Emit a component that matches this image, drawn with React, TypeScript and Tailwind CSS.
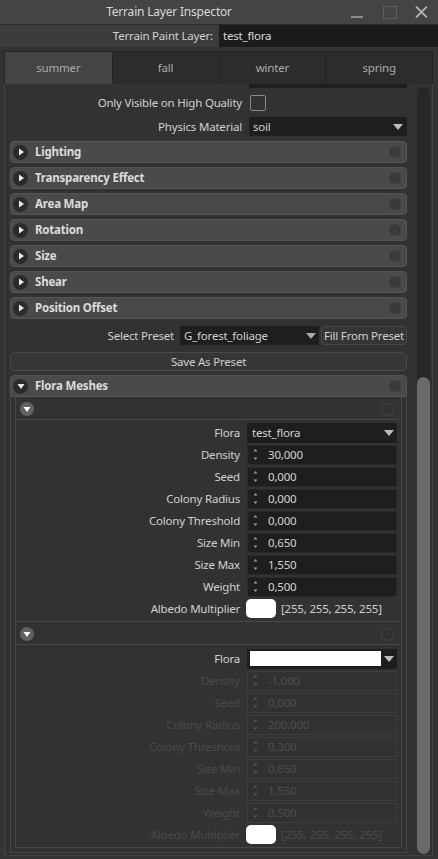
import React from "react";

const Tri = ({ dir, className }: { dir: "right" | "down"; className?: string }) => (
  <svg width="8" height="8" viewBox="0 0 8 8" className={className}>
    {dir === "right" ? (
      <path d="M2 0.5 L7 4 L2 7.5 Z" fill="currentColor" />
    ) : (
      <path d="M0.5 2 L7.5 2 L4 7 Z" fill="currentColor" />
    )}
  </svg>
);

const DropArrow = ({ className }: { className?: string }) => (
  <svg width="10" height="6" viewBox="0 0 10 6" className={className}>
    <path d="M0 0 L10 0 L5 6 Z" fill="currentColor" />
  </svg>
);

const Spin = ({ dim }: { dim?: boolean }) => (
  <svg width="5" height="13" viewBox="0 0 5 13" className={dim ? "text-[#5a5a5a]" : "text-[#9a9a9a]"}>
    <path d="M2.5 1 L4.5 3.5 L0.5 3.5 Z" fill="currentColor" />
    <path d="M0.5 9.5 L4.5 9.5 L2.5 12 Z" fill="currentColor" />
  </svg>
);

function Section({ title, open }: { title: string; open?: boolean }) {
  return (
    <div
      className={`h-[22px] flex items-center bg-[#4a4a4a] border border-[#555555] ${
        open ? "rounded-t-[4px]" : "rounded-[4px]"
      }`}
    >
      <div className="ml-[2px] w-[15px] h-[15px] rounded-full bg-[#2b2b2b] flex items-center justify-center text-[#ececec]">
        <Tri dir={open ? "down" : "right"} className={open ? "" : "ml-[1px]"} />
      </div>
      <span className="ml-[7px] font-bold text-[#dcdcdc]">{title}</span>
      <div className="ml-auto mr-[5px] w-[12px] h-[12px] rounded-full bg-[#3a3a3a]" />
    </div>
  );
}

function TopRow({ label, children, h = "h-[19px]" }: { label: string; children: React.ReactNode; h?: string }) {
  return (
    <div className={`flex items-center ${h}`}>
      <div className="w-[232px] text-right text-[#d0d0d0]">{label}</div>
      <div className="ml-[7px] w-[158px] h-full flex items-center">{children}</div>
    </div>
  );
}

function Field({ label, dim, children }: { label: string; dim?: boolean; children: React.ReactNode }) {
  return (
    <div className="flex items-center h-[19px]">
      <div className={`w-[224px] text-right ${dim ? "text-[#4b4b4b]" : "text-[#d0d0d0]"}`}>{label}</div>
      <div className="ml-[7px] w-[150px] h-full flex items-center">{children}</div>
    </div>
  );
}

function Num({ v, dim }: { v: string; dim?: boolean }) {
  return (
    <div
      className={`w-full h-[20px] flex items-center border ${
        dim ? "bg-[#313131] border-[#3d3d3d] text-[#4e4e4e]" : "bg-[#1e1e1e] border-[#2a2a2a] text-[#d2d2d2]"
      }`}
    >
      <div className="ml-[5px] flex items-center">
        <Spin dim={dim} />
      </div>
      <span className="ml-[10px]">{v}</span>
    </div>
  );
}

function Albedo({ dim }: { dim?: boolean }) {
  return (
    <div className="flex items-center -ml-[1px]">
      <div className="w-[30px] h-[19px] rounded-[5px] bg-white" />
      <span className={`ml-[5px] whitespace-nowrap ${dim ? "text-[#4b4b4b]" : "text-[#d0d0d0]"}`}>
        [255, 255, 255, 255]
      </span>
    </div>
  );
}

function SubHeader() {
  return (
    <div className="h-[23px] flex items-center border-b border-[#474747]">
      <div className="ml-[4px] mt-[2px] w-[14px] h-[14px] rounded-full bg-[#626262] flex items-center justify-center text-white">
        <Tri dir="down" />
      </div>
      <div className="ml-auto mr-[7px] mt-[2px] w-[13px] h-[13px] rounded-full border border-[#474747] bg-[#313131]" />
    </div>
  );
}

export default function App() {
  const f1: [string, string][] = [
    ["Density", "30,000"],
    ["Seed", "0,000"],
    ["Colony Radius", "0,000"],
    ["Colony Threshold", "0,000"],
    ["Size Min", "0,650"],
    ["Size Max", "1,550"],
    ["Weight", "0,500"],
  ];
  const f2: [string, string][] = [
    ["Density", "-1,000"],
    ["Seed", "0,000"],
    ["Colony Radius", "200,000"],
    ["Colony Threshold", "0,300"],
    ["Size Min", "0,650"],
    ["Size Max", "1,550"],
    ["Weight", "0,500"],
  ];
  return (
    <div className="w-[438px] h-[859px] overflow-hidden bg-[#333333] flex flex-col font-['Noto_Sans',sans-serif] text-[11.5px] tracking-[-0.2px] leading-none text-[#d0d0d0]">
      {/* title bar */}
      <div className="h-[25px] shrink-0 bg-[#444444] border-b border-[#2c2c2c] flex items-center">
        <div className="w-[338px] text-center text-[12px] text-[#d8d8d8]">Terrain Layer Inspector</div>
        <div className="flex-1 flex items-center h-full">
          <div className="ml-[13px] mt-[10px] w-[12px] h-[2px] bg-[#8a8a8a]" />
          <div className="ml-[20px] w-[14px] h-[13px] border border-[#5e5e5e]" />
          <svg width="13" height="12" viewBox="0 0 13 12" className="ml-[18px] text-[#b0b0b0]">
            <path d="M1 0.5 L12 11.5 M12 0.5 L1 11.5" stroke="currentColor" strokeWidth="1.8" />
          </svg>
        </div>
      </div>
      {/* paint layer */}
      <div className="h-[22px] shrink-0 bg-[#3c3c3c] flex items-center">
        <div className="w-[213px] text-right text-[#d0d0d0]">Terrain Paint Layer:</div>
        <div className="ml-[6px] flex-1 h-full bg-[#1b1b1b] flex items-center pl-[4px] text-[#dadada]">test_flora</div>
      </div>
      <div className="h-[4px] shrink-0" />
      {/* tabs */}
      <div className="ml-[4px] w-[429px] h-[33px] shrink-0 grid grid-cols-4 border-t border-x border-[#252525] bg-[#2c2c2c]">
        {["summer", "fall", "winter", "spring"].map((t, i) => (
          <div
            key={t}
            className={`flex items-center justify-center text-[#ababab] ${
              i === 0 ? "bg-[#444444]" : "bg-[#2c2c2c] border-l border-[#222222]"
            }`}
          >
            {t}
          </div>
        ))}
      </div>
      {/* content */}
      <div className="ml-[4px] w-[429px] h-[772px] shrink-0 flex border-x border-b border-[#424242] bg-[#323232]">
        <div className="ml-[5px] w-[397px] flex flex-col">
          <div className="ml-[239px] w-[158px] h-[4px] bg-[#1e1e1e]" />
          <div className="mt-[5px]">
            <TopRow label="Only Visible on High Quality" h="h-[20px]">
              <div className="ml-[1px] w-[16px] h-[16px] rounded-[2px] border border-[#8a8a8a]" />
            </TopRow>
          </div>
          <div className="mt-[4px]">
            <TopRow label="Physics Material">
              <div className="w-full h-full bg-[#1e1e1e] flex items-center pl-[4px] text-[#d2d2d2]">
                soil
                <DropArrow className="ml-auto mr-[4px] text-[#bdbdbd]" />
              </div>
            </TopRow>
          </div>
          <div className="mt-[5px] flex flex-col gap-[4px]">
            {["Lighting", "Transparency Effect", "Area Map", "Rotation", "Size", "Shear", "Position Offset"].map((s) => (
              <Section key={s} title={s} />
            ))}
          </div>
          <div className="mt-[7px] h-[19px] flex items-center">
            <div className="w-[164px] text-right">Select Preset</div>
            <div className="ml-[6px] w-[139px] h-full bg-[#1e1e1e] flex items-center pl-[4px] text-[#d2d2d2]">
              G_forest_foliage
              <DropArrow className="ml-auto mr-[3px] text-[#a8a8a8]" />
            </div>
            <div className="ml-[2px] flex-1 h-full rounded-[4px] border border-[#484848] bg-[#353535] flex items-center justify-center text-[#d0d0d0]">
              Fill From Preset
            </div>
          </div>
          <div className="mt-[7px] h-[19px] rounded-[5px] border border-[#4a4a4a] bg-[#363636] flex items-center justify-center text-[#d0d0d0]">
            Save As Preset
          </div>
          <div className="mt-[4px]">
            <Section title="Flora Meshes" open />
          </div>
          <div className="border-x border-b border-[#474747] px-[4px] pb-[4px] flex flex-col">
            {/* item 1 */}
            <div className="border-x border-b border-[#474747] flex flex-col">
              <SubHeader />
              <div className="mt-[3px] pb-[3px] flex flex-col gap-[3px]">
                <Field label="Flora">
                  <div className="w-full h-[20px] bg-[#1e1e1e] flex items-center pl-[5px] text-[#d2d2d2]">
                    test_flora
                    <DropArrow className="ml-auto mr-[3px] text-[#bdbdbd]" />
                  </div>
                </Field>
                {f1.map(([l, v]) => (
                  <Field key={l} label={l}>
                    <Num v={v} />
                  </Field>
                ))}
                <Field label="Albedo Multiplier">
                  <Albedo />
                </Field>
              </div>
            </div>
            {/* item 2 */}
            <div className="border-x border-b border-[#474747] flex flex-col">
              <SubHeader />
              <div className="mt-[4px] pb-[3px] flex flex-col gap-[3px]">
                <Field label="Flora">
                  <div className="w-full h-[20px] bg-[#1e1e1e] flex items-center">
                    <div className="ml-[3px] w-[131px] h-[15px] bg-white" />
                    <DropArrow className="ml-auto mr-[3px] text-[#bdbdbd]" />
                  </div>
                </Field>
                {f2.map(([l, v]) => (
                  <Field key={l} label={l} dim>
                    <Num v={v} dim />
                  </Field>
                ))}
                <Field label="Albedo Multiplier" dim>
                  <Albedo dim />
                </Field>
              </div>
            </div>
          </div>
        </div>
        {/* scrollbar */}
        <div className="ml-[10px] w-[13px] pt-[3px] pb-[1px] flex flex-col">
          <div className="flex-1 rounded-[7px] bg-[#262626] flex flex-col justify-end">
            <div className="h-[477px] rounded-[7px] bg-[#6a6a6a]" />
          </div>
        </div>
      </div>
    </div>
  );
}
